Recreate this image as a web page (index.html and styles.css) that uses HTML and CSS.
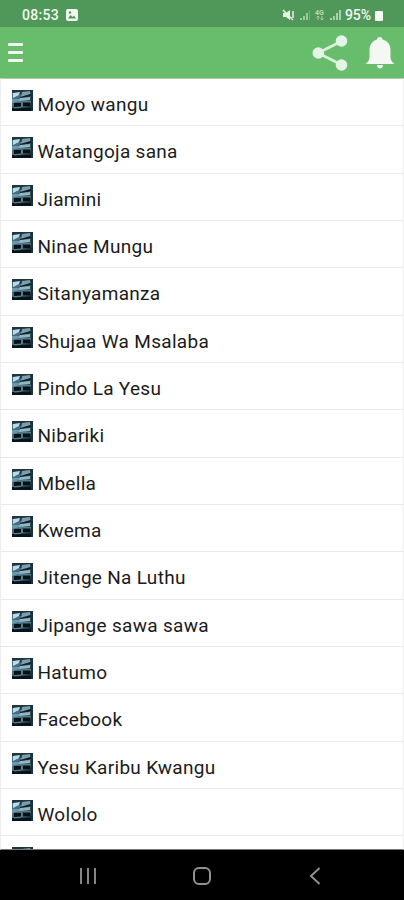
FILE: index.html
```html
<!DOCTYPE html>
<html lang="sw">
<head>
<meta charset="utf-8">
<meta name="viewport" content="width=device-width">
<title>Nyimbo</title>
<link rel="stylesheet" href="styles.css">
</head>
<body>
<svg class="defs" aria-hidden="true">
  <defs>
    <linearGradient id="sky" x1="0" y1="0" x2="1" y2="1">
      <stop offset="0" stop-color="#46728e"/><stop offset=".45" stop-color="#49697b"/><stop offset="1" stop-color="#07131b"/>
    </linearGradient>
    <symbol id="thumb" viewBox="0 0 21 21">
      <rect width="21" height="21" fill="url(#sky)"/>
      <path d="M0 0H21V2L9 5L0 3Z" fill="#24343f"/>
      <path d="M1 3L8 2L7 5L1 8Z" fill="#b8dbe9"/>
      <path d="M10 2L18 1V4L9 7Z" fill="#7b9eae"/>
      <path d="M8 7L19 4V6L8 9Z" fill="#10202a"/>
      <path d="M0 9H8V11L0 13Z" fill="#6899ad"/>
      <path d="M8 8L18 7V10L7 11Z" fill="#91b8bd"/>
      <path d="M2 13H9V17H2ZM11 12H18V16H11Z" fill="#061017"/>
      <path d="M7 11H19V12.500H7ZM9 13H11V17H9Z" fill="#547d89"/>
      <path d="M0 18H21V21H0Z" fill="#07131b"/>
      <path d="M2 17L9 16.500V18L2 18.500Z" fill="#557987"/>
      <path d="M19 0H21V21H19Z" fill="#17313f"/>
    </symbol>
  </defs>
</svg>
<div class="screen">
  <header class="status">
    <span class="time">08:53</span>
    <svg class="photo" viewBox="0 0 12 12"><rect width="12" height="12" rx="2" fill="#f0f8ef"/><path d="M2 9.500L4.500 6L6.500 8L8 6.500L10 9.500Z" fill="#50985a"/><circle cx="4" cy="3.500" r="1.200" fill="#50985a"/></svg>
    <svg class="signals" viewBox="0 0 60 14">
      <path d="M1 5H4L8 2V12L4 9H1Z" fill="#e4f2e4"/><path d="M1 2L11 12M11 3V10" stroke="#e4f2e4" stroke-width="1.500"/>
      <path d="M19 10V12M22 8V12M25 5V12" stroke="#9bcb9e" stroke-width="2"/><path d="M27.500 2V12" stroke="#76ae7a"/>
      <text x="33" y="6.500" class="network">4G</text><path d="M36 12V8M34.500 9.500L36 8L37.500 9.500M40 8V12M38.500 10.500L40 12L41.500 10.500" stroke="#a9d1aa" fill="none"/>
      <path d="M49 10V12M52 8V12M55 5V12M58 2V12" stroke="#b4d8b5" stroke-width="1.800"/>
    </svg>
    <span class="percent">95%</span>
    <span class="battery"></span>
  </header>
  <nav class="toolbar">
    <div class="menu"><i></i><i></i><i></i></div>
    <svg class="share" viewBox="0 0 36 38"><path d="M30 7L6 19L30 31" fill="none" stroke="#d9f0da" stroke-width="2.800"/><g fill="#e4f4e5"><circle cx="29.500" cy="7" r="5.800"/><circle cx="6.300" cy="19" r="5.800"/><circle cx="29.500" cy="31" r="5.800"/></g></svg>
    <svg class="bell" viewBox="0 0 30 34"><path d="M12 3.500C12 0 17.500 0 17.500 3.500C23 5 25.500 9 25.500 14V21C25.500 24 27 26 29.500 28H.5C3 26 4.500 24 4.500 21V14C4.500 9 7 5 12 3.500ZM12 29H18C18 33.500 12 33.500 12 29Z" fill="#f4f8f2"/></svg>
  </nav>
  <main class="list">
    <div class="row"><svg><use href="#thumb"/></svg><span>Moyo wangu</span></div>
    <div class="row"><svg><use href="#thumb"/></svg><span>Watangoja sana</span></div>
    <div class="row"><svg><use href="#thumb"/></svg><span>Jiamini</span></div>
    <div class="row"><svg><use href="#thumb"/></svg><span>Ninae Mungu</span></div>
    <div class="row"><svg><use href="#thumb"/></svg><span>Sitanyamanza</span></div>
    <div class="row"><svg><use href="#thumb"/></svg><span>Shujaa Wa Msalaba</span></div>
    <div class="row"><svg><use href="#thumb"/></svg><span>Pindo La Yesu</span></div>
    <div class="row"><svg><use href="#thumb"/></svg><span>Nibariki</span></div>
    <div class="row"><svg><use href="#thumb"/></svg><span>Mbella</span></div>
    <div class="row"><svg><use href="#thumb"/></svg><span>Kwema</span></div>
    <div class="row"><svg><use href="#thumb"/></svg><span>Jitenge Na Luthu</span></div>
    <div class="row"><svg><use href="#thumb"/></svg><span>Jipange sawa sawa</span></div>
    <div class="row"><svg><use href="#thumb"/></svg><span>Hatumo</span></div>
    <div class="row"><svg><use href="#thumb"/></svg><span>Facebook</span></div>
    <div class="row"><svg><use href="#thumb"/></svg><span>Yesu Karibu Kwangu</span></div>
    <div class="row"><svg><use href="#thumb"/></svg><span>Wololo</span></div>
    <div class="row"><svg><use href="#thumb"/></svg></div>
  </main>
  <footer class="system">
    <svg viewBox="0 0 18 18"><path d="M2 1V17M9 1V17M16 1V17" stroke="#858585" stroke-width="2"/></svg>
    <svg viewBox="0 0 18 18"><rect x="1" y="1" width="16" height="16" rx="5" fill="none" stroke="#929292" stroke-width="2"/></svg>
    <svg viewBox="0 0 18 18"><path d="M13.500 1L5 9L13.500 17" fill="none" stroke="#929292" stroke-width="1.900"/></svg>
  </footer>
</div>
</body>
</html>
```
FILE: styles.css
```css
* { box-sizing: border-box; }
body { margin: 0; font-family: Roboto, sans-serif; background: #fff; }
.defs { position: absolute; width: 0; height: 0; }
.screen { width: 404px; height: 900px; display: flex; flex-direction: column; overflow: hidden; }
.status { height: 27px; flex: none; background: #50985a; color: #f0f8ef; display: flex; align-items: center; padding: 3px 21px 0 22px; }
.time { width: 38px; font-size: 14px; font-weight: 500; letter-spacing: .3px; white-space: nowrap; }
.photo { width: 12px; height: 12px; margin-left: 6px; }
.signals { width: 60px; height: 14px; margin-left: auto; }
.network { font-size: 7px; font-weight: 700; fill: #b4d8b5; }
.percent { width: 29px; margin-left: 3px; font-size: 14px; font-weight: 500; letter-spacing: -.1px; }
.battery { width: 8px; height: 10px; border-radius: 1px; background: #f8fcf7; margin-top: 1px; margin-left: 1px; }
.toolbar { height: 51px; flex: none; background: #68bd6c; display: flex; align-items: center; padding: 0 9px 0 8px; }
.menu { width: 15px; height: 19px; display: flex; flex-direction: column; justify-content: space-between; }
.menu i { height: 3px; background: #f2faf2; border-radius: 1px; }
.share { width: 36px; height: 38px; margin-left: auto; }
.bell { width: 30px; height: 34px; margin-left: 17px; }
.list { flex: 1; min-height: 0; overflow: hidden; background: #fff; border-top: 1px solid #a8cda9; border-left: 1px solid #eee; border-right: 1px solid #eee; border-bottom: 1px solid #777; }
.row { height: 47.33px; border-bottom: 1.5px solid #e9e9e9; display: flex; padding-left: 10.5px; color: #1b1b1b; }
.row svg { width: 21px; height: 21px; margin-top: 11px; flex: none; }
.row span { margin: 14px 0 0 5px; font-size: 19px; line-height: 24px; letter-spacing: .3px; white-space: nowrap; }
.system { height: 50px; flex: none; background: #000; display: flex; align-items: center; justify-content: space-between; padding: 2px 80px 0 79px; }
.system svg { width: 18px; height: 18px; }
```
